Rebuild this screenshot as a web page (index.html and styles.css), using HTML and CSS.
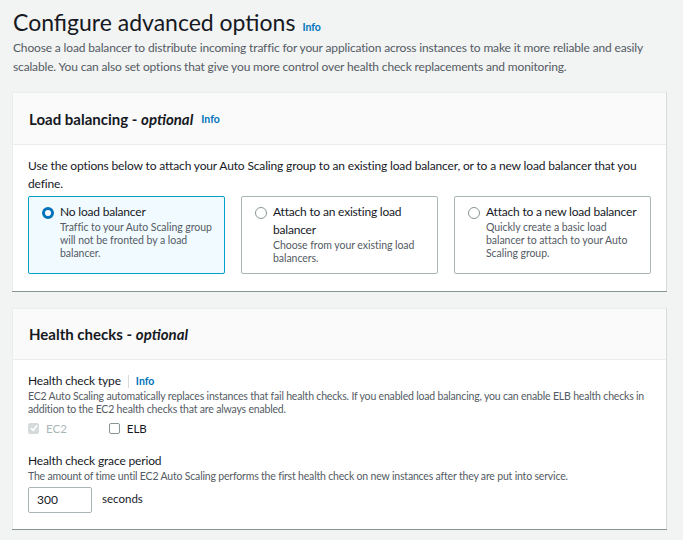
FILE: index.html
```html
<!DOCTYPE html>
<html>
<head>
<meta charset="utf-8">
<link rel="stylesheet" href="styles.css">
</head>
<body>
<div class="page">
  <div class="page-head">
    <h1 class="title">Configure advanced options</h1>
    <a class="info info-title">Info</a>
  </div>
  <p class="page-desc">Choose a load balancer to distribute incoming traffic for your application across instances to make it more reliable and easily scalable. You can also set options that give you more control over health check replacements and monitoring.</p>

  <section class="card card-lb">
    <div class="card-head">
      <h2 class="card-title">Load balancing - <i>optional</i></h2>
      <a class="info">Info</a>
    </div>
    <div class="card-body">
      <p class="body-text">Use the options below to attach your Auto Scaling group to an existing load balancer, or to a new load balancer that you define.</p>
      <div class="tiles">
        <div class="tile selected">
          <span class="radio checked"></span>
          <div class="tile-text">
            <div class="tile-title">No load balancer</div>
            <div class="tile-desc">Traffic to your Auto Scaling group will not be fronted by a load balancer.</div>
          </div>
        </div>
        <div class="tile">
          <span class="radio"></span>
          <div class="tile-text">
            <div class="tile-title">Attach to an existing load balancer</div>
            <div class="tile-desc">Choose from your existing load balancers.</div>
          </div>
        </div>
        <div class="tile">
          <span class="radio"></span>
          <div class="tile-text">
            <div class="tile-title">Attach to a new load balancer</div>
            <div class="tile-desc">Quickly create a basic load balancer to attach to your Auto Scaling group.</div>
          </div>
        </div>
      </div>
    </div>
  </section>

  <section class="card card-hc">
    <div class="card-head hc-head">
      <h2 class="card-title">Health checks - <i>optional</i></h2>
    </div>
    <div class="card-body hc-body">
      <div class="field-label">
        <span class="label-text">Health check type</span>
        <span class="divider"></span>
        <a class="info">Info</a>
      </div>
      <p class="field-desc">EC2 Auto Scaling automatically replaces instances that fail health checks. If you enabled load balancing, you can enable ELB health checks in addition to the EC2 health checks that are always enabled.</p>
      <div class="checks">
        <label class="check disabled">
          <span class="box checked-box">
            <svg width="8" height="8" viewBox="0 0 8 8"><path d="M1 4.2 L3.2 6.3 L7 1.5" fill="none" stroke="#fff" stroke-width="1.6"/></svg>
          </span>
          <span class="check-label">EC2</span>
        </label>
        <label class="check">
          <span class="box"></span>
          <span class="check-label">ELB</span>
        </label>
      </div>
      <div class="field-label grace">
        <span class="label-text">Health check grace period</span>
      </div>
      <p class="field-desc">The amount of time until EC2 Auto Scaling performs the first health check on new instances after they are put into service.</p>
      <div class="grace-row">
        <div class="input">300</div>
        <span class="unit">seconds</span>
      </div>
    </div>
  </section>
</div>
</body>
</html>
```

FILE: styles.css
```css
* { box-sizing: border-box; }
html, body { margin: 0; padding: 0; }
body {
  background: #f2f3f3;
  font-family: Lato, "Liberation Sans", sans-serif;
  color: #16191f;
  width: 683px;
  height: 540px;
  overflow: hidden;
}
.page {
  padding: 7px 16px 0 12px;
}
.page-head {
  display: flex;
  align-items: baseline;
  padding-left: 1px;
}
.title {
  margin: 0;
  font-weight: 400;
  font-size: 23px;
  line-height: 30px;
  color: #16191f;
}
.info {
  color: #0073bb;
  font-weight: 700;
  font-size: 10.5px;
  margin-left: 7px;
}
.page-desc {
  margin: 1px 0 0 1px;
  font-size: 12px;
  letter-spacing: -0.15px;
  line-height: 19px;
  color: #545b64;
}
.card {
  background: #fff;
  margin-top: 16px;
  border-top: 1px solid #eaeded;
  border-left: 1px solid #eaeded;
  border-right: 1px solid #d5dbdb;
  box-shadow: 0 1px 0 0 #879596;
}
.card-head {
  background: #fafafa;
  height: 52px;
  border-bottom: 1px solid #eaeded;
  display: flex;
  align-items: center;
  padding-left: 16px;
}
.card-title {
  margin: 0;
  font-size: 15px;
  font-weight: 700;
  color: #16191f;
}
.card-title i { font-weight: 700; }
.card-head .info { margin-left: 8px; font-size: 10.5px; margin-top: 1px; }
.card-body {
  padding: 12px 15px 17px 15px;
}
.body-text {
  margin: 0;
  font-size: 12px;
  letter-spacing: -0.15px;
  line-height: 18px;
  color: #16191f;
}
.tiles {
  display: grid;
  grid-template-columns: 1fr 1fr 1fr;
  gap: 16px;
  margin-top: 3px;
}
.tile {
  border: 1px solid #aab7b8;
  border-radius: 2px;
  display: flex;
  align-items: flex-start;
  padding: 6px 10px 8px 13px;
  height: 78px;
}
.tile.selected {
  border-color: #00a1c9;
  background: #f1faff;
}
.radio {
  flex: none;
  width: 12px;
  height: 12px;
  border-radius: 50%;
  border: 1px solid #879596;
  background: #fff;
  margin-top: 4px;
  margin-right: 6px;
}
.radio.checked {
  border: 3.5px solid #0073bb;
}
.tile-title {
  font-size: 12px;
  letter-spacing: -0.2px;
  line-height: 18px;
  color: #16191f;
}
.tile-desc {
  font-size: 10.5px;
  letter-spacing: -0.05px;
  line-height: 13px;
  color: #545b64;
}
.card-hc { margin-top: 17px; }
.hc-head { height: 51px; }
.hc-body { padding-top: 12px; padding-bottom: 16px; }
.field-label {
  display: flex;
  align-items: center;
  font-size: 12px;
  letter-spacing: -0.15px;
  line-height: 18px;
  color: #16191f;
}
.divider {
  width: 1px;
  height: 13px;
  background: #d5dbdb;
  margin-left: 7px;
}
.field-label .info { margin-left: 7px; font-size: 10.5px; letter-spacing: 0; }
.field-desc {
  margin: 0;
  font-size: 10.5px;
  letter-spacing: -0.18px;
  line-height: 13px;
  color: #545b64;
}
.checks {
  display: flex;
  gap: 42px;
  margin-top: 4px;
  height: 16px;
  align-items: center;
}
.check {
  display: flex;
  align-items: center;
  font-size: 11.5px;
}
.box {
  width: 11px;
  height: 11px;
  border: 1px solid #879596;
  border-radius: 2px;
  background: #fff;
  margin-right: 7px;
  display: flex;
  align-items: center;
  justify-content: center;
}
.checked-box {
  background: #d5dbdb;
  border-color: #d5dbdb;
}
.check.disabled .check-label { color: #aab7b8; }
.grace { margin-top: 16px; }
.grace-row {
  display: flex;
  align-items: center;
  margin-top: 4px;
}
.input {
  width: 64px;
  height: 26px;
  border: 1px solid #aab7b8;
  border-radius: 2px;
  font-size: 12px;
  line-height: 24px;
  padding-left: 8px;
  color: #16191f;
}
.unit {
  margin-left: 10px;
  font-size: 11.5px;
  color: #16191f;
  margin-top: -3px;
}
```
